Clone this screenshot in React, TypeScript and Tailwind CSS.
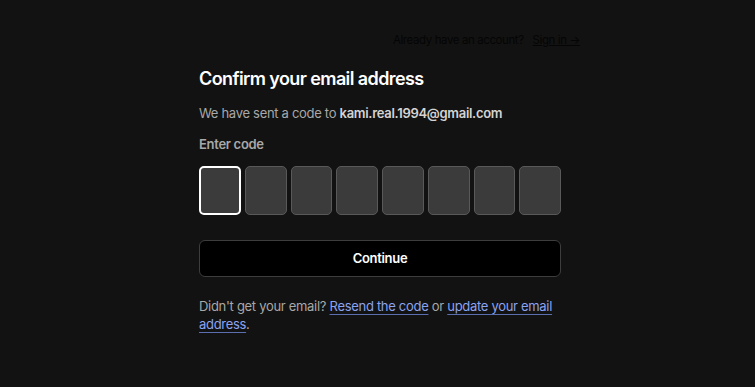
export default function App() {
    const boxes = [0, 1, 2, 3, 4, 5, 6, 7]

    return (
        <div className="min-h-[387px] w-full bg-[#121212] font-['Inter',sans-serif] antialiased">
            <div className="flex justify-end pr-[175px] pt-[32px]">
                <p className="text-[11.5px] leading-4 tracking-[-0.4px] text-[#050505]">
                    Already have an account?{" "}
                    <a href="#" className="ml-[6px] underline">Sign in →</a>
                </p>
            </div>
            <div className="ml-[199px] mt-[19px] w-[362px]">
                <h1 className="text-[18px] font-semibold leading-6 tracking-[-0.6px] text-white">Confirm your email address</h1>
                <p className="mt-[12px] text-[13px] leading-5 tracking-[-0.3px] text-[#a8a8a8]">
                    We have sent a code to <span className="font-semibold text-[#d4d4d4]">kami.real.1994@gmail.com</span>
                </p>
                <p className="mt-[11px] text-[13px] font-semibold leading-5 tracking-[-0.3px] text-[#a8a8a8]">Enter code</p>
                <div className="mt-[12px] grid grid-cols-8 gap-1">
                    {boxes.map((i) => (
                        <input
                            key={i}
                            type="text"
                            maxLength={1}
                            className={
                                i === 0
                                    ? "h-[49px] w-full rounded-[5px] border-2 border-white bg-[#3b3b3b] text-center text-white outline-none"
                                    : "h-[49px] w-full rounded-[5px] border border-[#595959] bg-[#3b3b3b] text-center text-white outline-none"
                            }
                        />
                    ))}
                </div>
                <button className="mt-[25px] flex h-[37px] w-full items-center justify-center rounded-[6px] border border-[#3d3d3d] bg-black text-[13px] font-semibold tracking-[-0.3px] text-white">
                    Continue
                </button>
                <p className="mt-[20px] text-[13px] leading-[18px] tracking-[-0.3px] text-[#a8a8a8]">
                    Didn't get your email?{" "}
                    <a href="#" className="text-[#8ba3f0] underline decoration-[#5b6fb0] underline-offset-[3px]">Resend the code</a>
                    {" "}or{" "}
                    <a href="#" className="text-[#8ba3f0] underline decoration-[#5b6fb0] underline-offset-[3px]">update your email address</a>.
                </p>
            </div>
        </div>
    )
}
